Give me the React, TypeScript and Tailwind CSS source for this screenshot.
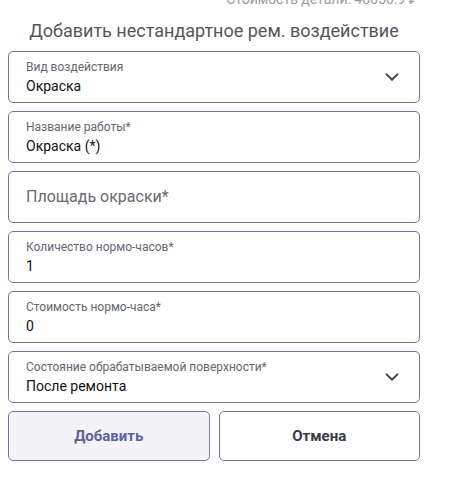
import { ChevronDown } from 'lucide-react';

function Field({
  label,
  value,
  select,
}: {
  label: string;
  value: string;
  select?: boolean;
}) {
  return (
    <div className="flex h-[52px] items-center rounded-[5px] border border-[#75739b] bg-white pl-[17px] pr-[16px]">
      <div className="min-w-0 flex-1">
        <div className="text-[12px] leading-[16px] text-[#666670]">{label}</div>
        <div className="mt-[2px] text-[14px] leading-[18px] text-[#111]">{value}</div>
      </div>
      {select ? <ChevronDown size={22} strokeWidth={2} className="text-[#44444e]" /> : null}
    </div>
  );
}

export default function App() {
  return (
    <div className="min-h-[502px] w-[451px] bg-white font-['Roboto',sans-serif]">
      <div className="mt-[-11px] pr-[33px] text-right text-[14px] leading-[20px] text-[#9a9aa2]">
        Стоимость детали: 48656.9 ₽
      </div>
      <div className="w-[412px] ml-[8px]">
        <div className="mt-[10px] text-center text-[18px] leading-[24px] text-[#55555c]">
          Добавить нестандартное рем. воздействие
        </div>
        <div className="mt-[8px] flex flex-col gap-[8px]">
          <Field label="Вид воздействия" value="Окраска" select />
          <Field label="Название работы*" value="Окраска (*)" />
          <div className="flex h-[52px] items-center rounded-[5px] border border-[#75739b] bg-white pl-[17px]">
            <span className="text-[16px] text-[#6a6a72]">Площадь окраски*</span>
          </div>
          <Field label="Количество нормо-часов*" value="1" />
          <Field label="Стоимость нормо-часа*" value="0" />
          <Field label="Состояние обрабатываемой поверхности*" value="После ремонта" select />
          <div className="grid grid-cols-2 gap-[9px]">
            <button className="h-[50px] rounded-[5px] border border-[#75739b] bg-[#f3f3f8] text-[15px] font-bold text-[#5c6299]">
              Добавить
            </button>
            <button className="h-[50px] rounded-[5px] border border-[#75739b] bg-white text-[15px] font-bold text-[#3a3a48]">
              Отмена
            </button>
          </div>
        </div>
      </div>
    </div>
  );
}
